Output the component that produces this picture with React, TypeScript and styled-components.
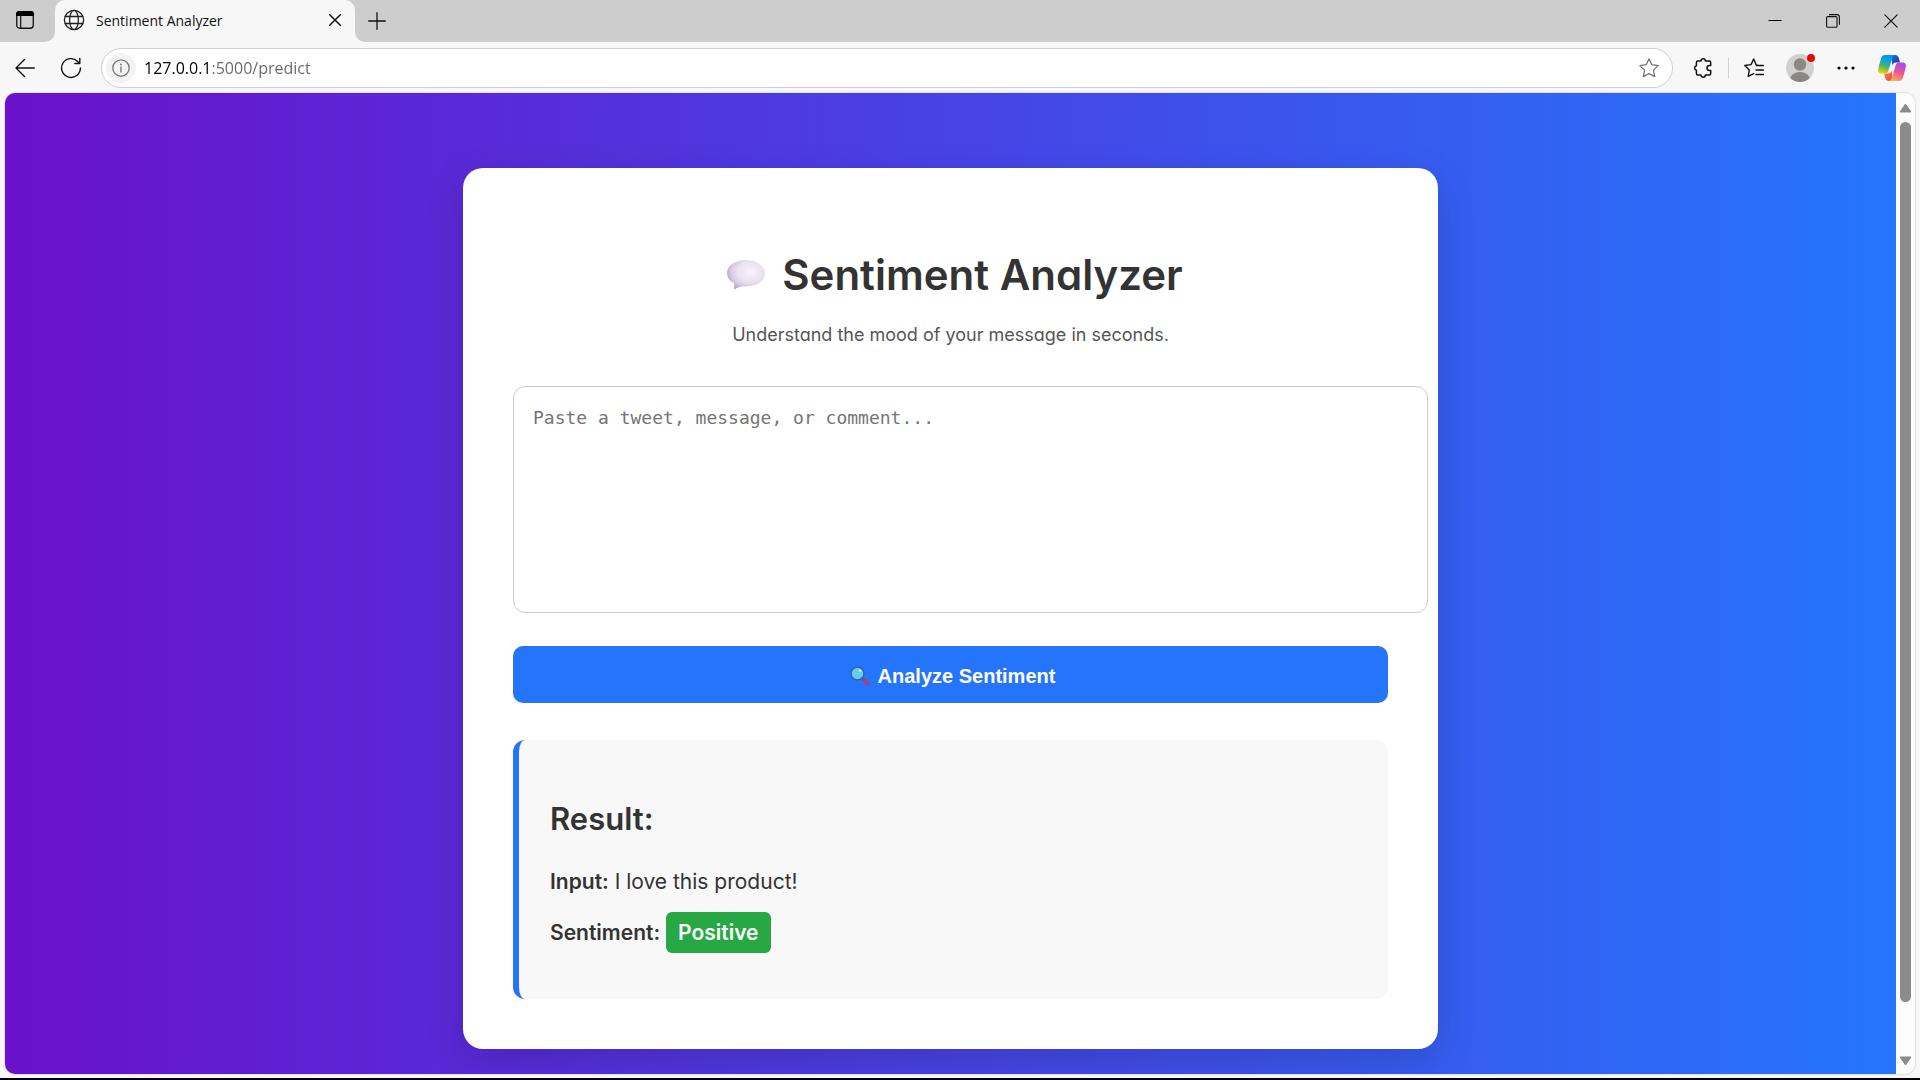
import React from 'react';
import styled, { createGlobalStyle } from 'styled-components';

const uiFont = '"Open Sans", "Noto Sans", sans-serif';
const pageFont = 'Inter, "Open Sans", sans-serif';

const GlobalStyle = createGlobalStyle`
  *, *::before, *::after { box-sizing: border-box; }
  body { margin: 0; background: #f7f7f7; }
  button { font: inherit; color: inherit; border: 0; padding: 0; background: none; cursor: pointer; }
  svg { display: block; flex: none; }
`;

const Window = styled.div`
  min-height: 100vh;
  display: flex;
  flex-direction: column;
  padding-bottom: 4px;
  border-bottom: 2px solid #000;
  background: #f7f7f7;
  font-family: ${uiFont};
  color: #111;
`;

const TabStrip = styled.header`
  display: flex;
  height: 42px;
  background: #f7f7f7;
`;

const StripStart = styled.div`
  width: 55px;
  display: flex;
  align-items: center;
  padding: 0 0 2px 16px;
  background: #cdcdcd;
  border-bottom-right-radius: 10px;
`;

const TabSlot = styled.div`
  width: 300px;
  background: linear-gradient(#cdcdcd 50%, #f7f7f7 50%);
`;

const Tab = styled.div`
  height: 100%;
  display: flex;
  align-items: center;
  padding: 0 10px 2px 8px;
  border-radius: 10px 10px 0 0;
  background: #f7f7f7;
  font-size: 14px;
`;

const TabTitle = styled.span`
  flex: 1;
  margin-left: 11px;
  white-space: nowrap;
`;

const StripRest = styled.div`
  flex: 1;
  display: flex;
  align-items: center;
  justify-content: space-between;
  padding-left: 10px;
  background: #cdcdcd;
  border-bottom-left-radius: 10px;
`;

const WindowControls = styled.div`
  display: flex;
`;

const IconButton = styled.button<{ $width?: number }>`
  width: ${(p) => p.$width ?? 32}px;
  height: 32px;
  flex: none;
  display: flex;
  align-items: center;
  justify-content: center;
`;

const Toolbar = styled.nav`
  display: flex;
  align-items: center;
  height: 51px;
  padding: 0 12px 0 9px;
  gap: 14px;
`;

const AddressBar = styled.div`
  flex: 1;
  height: 40px;
  display: flex;
  align-items: center;
  padding: 0 7px 0 4px;
  border: 1px solid #cfcfcf;
  border-radius: 20px;
  background: #fff;
`;

const InfoButton = styled.button`
  width: 30px;
  height: 30px;
  border-radius: 50%;
  display: flex;
  align-items: center;
  justify-content: center;
  background: #f3f3f3;
`;

const UrlInput = styled.input`
  flex: 1;
  min-width: 0;
  margin-left: 8px;
  padding: 0;
  border: 0;
  outline: 0;
  height: 28px;
  font: 16px ${uiFont};
  color: #666;
  background: linear-gradient(to right, #000 67px, #666 67px);
  -webkit-background-clip: text;
  background-clip: text;
  -webkit-text-fill-color: transparent;
`;

const ToolGroup = styled.div<{ $gap: number }>`
  display: flex;
  align-items: center;
  gap: ${(p) => p.$gap}px;
`;

const Divider = styled.span`
  width: 1px;
  height: 20px;
  background: #cfcfcf;
`;

const Frame = styled.div`
  flex: 1;
  display: flex;
  margin: 0 5px;
  border-radius: 10px;
  overflow: hidden;
  box-shadow: 0 0 2px rgba(0, 0, 0, 0.3);
`;

const Page = styled.main`
  flex: 1;
  min-width: 0;
  display: flex;
  justify-content: center;
  align-items: flex-start;
  padding: 75px 24px 25px;
  background: linear-gradient(to right, #6a11cb, #2575fc);
  font-family: ${pageFont};
  font-feature-settings: "cv11";
  color: #333;
`;

const Card = styled.section`
  width: 100%;
  max-width: 975px;
  padding: 50px;
  border-radius: 20px;
  background: #fff;
  box-shadow: 0 12px 38px rgba(0, 0, 0, 0.15);
`;

const Title = styled.h1`
  display: flex;
  align-items: center;
  justify-content: center;
  gap: 16px;
  margin: 27px 0 0;
  padding-left: 8px;
  font-size: 42px;
  font-weight: 600;
  line-height: 60px;
`;

const Subtitle = styled.p`
  margin: 16px 0 37px;
  font-size: 18px;
  line-height: 28px;
  text-align: center;
  color: #555;
`;

const MessageBox = styled.textarea`
  display: block;
  box-sizing: content-box;
  width: 100%;
  height: 187px;
  padding: 19px;
  border: 1px solid #ccc;
  border-radius: 12px;
  outline: 0;
  resize: none;
  font: 18px/24px "DejaVu Sans Mono", "Liberation Mono", monospace;
  &::placeholder { color: #757575; opacity: 1; }
`;

const AnalyzeButton = styled.button`
  width: 100%;
  height: 57px;
  margin-top: 33px;
  padding: 2px 0 0 4px;
  display: flex;
  align-items: center;
  justify-content: center;
  gap: 8px;
  border-radius: 10px;
  background: #2575fc;
  color: #fff;
  font: bold 20px/24px "Liberation Sans", Arial, sans-serif;
`;

const ResultPanel = styled.section`
  margin-top: 37px;
  padding: 31px;
  border-left: 6px solid #2575fc;
  border-radius: 12px;
  background: #f8f8f8;
`;

const ResultTitle = styled.h2`
  margin: 25px 0;
  font-size: 31px;
  font-weight: 600;
  line-height: 45px;
`;

const ResultLine = styled.p`
  margin: 0 0 20px;
  font-size: 21px;
  line-height: 31px;
  strong { font-weight: 600; }
`;

const Badge = styled.span`
  padding: 8px 12px;
  border-radius: 6px;
  background: #28a745;
  color: #fff;
  font-weight: 600;
`;

const Scrollbar = styled.aside`
  width: 19px;
  display: flex;
  flex-direction: column;
  align-items: center;
  background: #fcfcfc;
`;

const ScrollArrow = styled.button<{ $height: number }>`
  width: 19px;
  height: ${(p) => p.$height}px;
  display: flex;
  align-items: flex-start;
  justify-content: center;
  padding-top: ${(p) => (p.$height > 25 ? 10 : 4)}px;
`;

const Track = styled.div`
  flex: 1;
  width: 11px;
`;

const Thumb = styled.div`
  height: 94.6%;
  border-radius: 6px;
  background: #8b8b8b;
`;

const line = { fill: 'none', stroke: '#111', strokeWidth: 1.5, strokeLinecap: 'round', strokeLinejoin: 'round' } as const;

const WorkspaceIcon = () => (
  <svg width="18" height="18" viewBox="0 0 18 18">
    <rect x=".75" y=".75" width="16.5" height="16.5" rx="3" {...line} strokeWidth={1.3} />
    <path d="M0 5V3a3 3 0 0 1 3-3h12a3 3 0 0 1 3 3v2z" fill="#000" />
    <path d="M4.7 5v12" {...line} strokeWidth={1.2} />
  </svg>
);

const GlobeIcon = () => (
  <svg width="22" height="22" viewBox="0 0 22 22">
    <g {...line} strokeWidth={1.3} stroke="#222">
      <circle cx="11" cy="11" r="9.6" />
      <ellipse cx="11" cy="11" rx="4.4" ry="9.6" />
      <path d="M2.3 7.5h17.4M2.3 14.5h17.4" />
    </g>
  </svg>
);

const CrossIcon = ({ size, weight }: { size: number; weight: number }) => (
  <svg width={size} height={size} viewBox="0 0 12 12">
    <path d="M.7.7l10.6 10.6M11.3.7L.7 11.3" {...line} strokeWidth={weight} />
  </svg>
);

const PlusIcon = () => (
  <svg width="18" height="18" viewBox="0 0 18 18">
    <path d="M9 .7v16.6M.7 9h16.6" {...line} strokeWidth={1.3} />
  </svg>
);

const MinimizeIcon = () => (
  <svg width="14" height="14" viewBox="0 0 14 14">
    <path d="M.5 6.5h13" stroke="#000" />
  </svg>
);

const RestoreIcon = () => (
  <svg width="14" height="14" viewBox="0 0 14 14">
    <g fill="none" stroke="#111" strokeWidth="1.1">
      <rect x=".6" y="2.6" width="10.4" height="10.6" rx="1" />
      <path d="M3 .6h8.2a2.2 2.2 0 0 1 2.2 2.2v8" />
    </g>
  </svg>
);

const BackIcon = () => (
  <svg width="20" height="20" viewBox="0 0 20 20">
    <path d="M19.3 10H1M9.5 1.5L1 10l8.5 8.5" {...line} strokeWidth={1.4} />
  </svg>
);

const ReloadIcon = () => (
  <svg width="22" height="22" viewBox="0 0 22 22">
    <path d="M20.4 11a9.4 9.4 0 1 1-2.7-6.6l1.8 1.9M19.8 1.500v5h-5" {...line} strokeWidth={1.4} />
  </svg>
);

const InfoIcon = () => (
  <svg width="18" height="18" viewBox="0 0 18 18">
    <circle cx="9" cy="9" r="8.2" fill="none" stroke="#767676" strokeWidth="1.3" />
    <path d="M9 8v5" stroke="#767676" strokeWidth="1.4" strokeLinecap="round" />
    <circle cx="9" cy="5.4" r=".9" fill="#767676" />
  </svg>
);

const StarIcon = () => (
  <svg width="20" height="20" viewBox="0 0 20 20">
    <path
      d="M10 .9l2.8 5.8 6.4.9-4.7 4.5 1.2 6.6L10 15.700l-5.700 3 1.200-6.600L.8 7.600l6.400-.9z"
      {...line}
      stroke="#767676"
      strokeWidth={1.3}
    />
  </svg>
);

const PuzzleIcon = () => (
  <svg width="20" height="20" viewBox="0 0 20 20">
    <path
      d="M8 3a2.2 2.2 0 0 1 4.400 0h3.800a1.500 1.500 0 0 1 1.500 1.500v3h-1.200a2.500 2.500 0 0 0 0 5h1.200v3a1.500 1.500 0 0 1-1.500 1.500h-3.800a2.200 2.200 0 0 1-4.400 0H4.900a1.500 1.500 0 0 1-1.500-1.500v-3.300a2.300 2.300 0 0 1 0-4.500V4.500A1.500 1.500 0 0 1 4.900 3z"
      {...line}
    />
  </svg>
);

const FavoritesIcon = () => (
  <svg width="20" height="20" viewBox="0 0 20 20">
    <path d="M13.5 7.2l-1.300-.2L9.700 1 7 6.600l-6.200.9 4.500 4.400-1.100 6.400 5.500-2.700M12.500 7.500H19.400M12 12h7.400M12 16.500h7.400" {...line} strokeWidth={1.4} />
  </svg>
);

const AvatarIcon = () => (
  <svg width="32" height="32" viewBox="0 0 32 32">
    <clipPath id="avatar-clip"><circle cx="16" cy="16" r="14" /></clipPath>
    <circle cx="16" cy="16" r="14" fill="#d2d0ce" />
    <g clipPath="url(#avatar-clip)" fill="#8a8886">
      <circle cx="16" cy="12.5" r="6.2" />
      <ellipse cx="16" cy="28" rx="10" ry="8" />
    </g>
    <circle cx="27" cy="6" r="4" fill="#e30b0b" />
  </svg>
);

const MoreIcon = () => (
  <svg width="18" height="4" viewBox="0 0 18 4">
    <circle cx="2" cy="2" r="1.6" /><circle cx="9" cy="2" r="1.6" /><circle cx="16" cy="2" r="1.6" />
  </svg>
);

const CopilotIcon = () => (
  <svg width="30" height="28" viewBox="0 0 30 28">
    <defs>
      <linearGradient id="cp-a" x1=".6" y1="0" x2=".3" y2="1">
        <stop offset="0" stopColor="#0a8ff0" /><stop offset=".35" stopColor="#12a5cf" />
        <stop offset=".65" stopColor="#52b95c" /><stop offset="1" stopColor="#f5d000" />
      </linearGradient>
      <linearGradient id="cp-b" x1=".7" y1="0" x2=".3" y2="1">
        <stop offset="0" stopColor="#a24df0" /><stop offset=".5" stopColor="#ee5590" /><stop offset="1" stopColor="#ffae5c" />
      </linearGradient>
      <linearGradient id="cp-c" x1="0" y1="0" x2="1" y2="1">
        <stop offset="0" stopColor="#1a6fe0" /><stop offset="1" stopColor="#1833b5" />
      </linearGradient>
      <linearGradient id="cp-d" x1="0" y1="0" x2="1" y2="1">
        <stop offset="0" stopColor="#ff8a2a" /><stop offset="1" stopColor="#ee3f4e" />
      </linearGradient>
    </defs>
    <path d="M14 1h4c2.200 0 3.200 1 3.800 3l1.200 4.500h-4c-2 0-3 1-3.600 3z" fill="url(#cp-c)" />
    <path d="M16 27h-4c-2.200 0-3.200-1-3.800-3L7 19.500h4c2 0 3-1 3.600-3z" fill="url(#cp-d)" />
    <path d="M8 1h10c-1.600.4-2.300 1.600-2.900 3.500l-3.700 12c-.6 2-1.600 3-3.600 3H4.500C1 19.500.6 17 1.400 14L4 4.500C4.700 2.100 5.800 1 8 1z" fill="url(#cp-a)" />
    <path d="M22 27H12c1.600-.4 2.300-1.600 2.900-3.500l3.700-12c.6-2 1.600-3 3.600-3h3.300c3.500 0 3.900 2.500 3.100 5.500L26 23.500c-.7 2.400-1.800 3.500-4 3.500z" fill="url(#cp-b)" />
  </svg>
);

const BubbleIcon = () => (
  <svg width="40" height="32" viewBox="0 0 40 32">
    <defs>
      <radialGradient id="bubble" cx=".62" cy=".4" r=".62">
        <stop offset="0" stopColor="#f6f3f9" /><stop offset=".55" stopColor="#eae2f1" />
        <stop offset=".85" stopColor="#d5c8e3" /><stop offset="1" stopColor="#b8a8d4" />
      </radialGradient>
    </defs>
    <path d="M20 1c10.600 0 19 5.700 19 13.200S30.600 27.600 20 27.600h-4.700c-2.300.4-4.600 1.500-7.100 3.200V24C3.800 21.800 1 18.300 1 14.200 1 6.700 9.400 1 20 1z" fill="url(#bubble)" />
  </svg>
);

const MagnifierIcon = () => (
  <svg width="20" height="20" viewBox="0 0 20 20">
    <path d="M14.500 14.500l3 3" stroke="#9c4a78" strokeWidth="4.400" strokeLinecap="round" />
    <path d="M11.500 11.500l2.500 2.500" stroke="#4d5aa6" strokeWidth="2" />
    <circle cx="7.500" cy="7.500" r="6.500" fill="#5fcdec" stroke="#3b5aa8" strokeWidth="1.400" />
    <circle cx="10" cy="4.600" r="1.300" fill="#c9f1fb" />
  </svg>
);

const Arrow = ({ down = false }: { down?: boolean }) => (
  <svg width="13" height="10" viewBox="0 0 13 10">
    <path d={down ? 'M1 1h11L6.500 9z' : 'M6.500 1l5.500 8H1z'} fill="#8b8b8b" stroke="#8b8b8b" strokeLinejoin="round" />
  </svg>
);

export default function App() {
  return (
    <Window>
      <GlobalStyle />
      <TabStrip>
        <StripStart>
          <button aria-label="Tab actions"><WorkspaceIcon /></button>
        </StripStart>
        <TabSlot>
          <Tab>
            <GlobeIcon />
            <TabTitle>Sentiment Analyzer</TabTitle>
            <IconButton $width={20} aria-label="Close tab"><CrossIcon size={12} weight={1.5} /></IconButton>
          </Tab>
        </TabSlot>
        <StripRest>
          <IconButton $width={24} aria-label="New tab"><PlusIcon /></IconButton>
          <WindowControls>
            <IconButton $width={58} aria-label="Minimize"><MinimizeIcon /></IconButton>
            <IconButton $width={58} aria-label="Restore"><RestoreIcon /></IconButton>
            <IconButton $width={58} aria-label="Close"><CrossIcon size={14} weight={1} /></IconButton>
          </WindowControls>
        </StripRest>
      </TabStrip>

      <Toolbar>
        <IconButton aria-label="Back"><BackIcon /></IconButton>
        <IconButton aria-label="Refresh"><ReloadIcon /></IconButton>
        <AddressBar>
          <InfoButton aria-label="Site information"><InfoIcon /></InfoButton>
          <UrlInput aria-label="Address" defaultValue="127.0.0.1:5000/predict" spellCheck={false} />
          <IconButton aria-label="Add to favorites"><StarIcon /></IconButton>
        </AddressBar>
        <ToolGroup $gap={9}>
          <IconButton aria-label="Extensions"><PuzzleIcon /></IconButton>
          <Divider />
          <IconButton aria-label="Favorites"><FavoritesIcon /></IconButton>
        </ToolGroup>
        <ToolGroup $gap={14}>
          <IconButton aria-label="Profile"><AvatarIcon /></IconButton>
          <IconButton aria-label="Settings and more"><MoreIcon /></IconButton>
          <IconButton aria-label="Copilot"><CopilotIcon /></IconButton>
        </ToolGroup>
      </Toolbar>

      <Frame>
        <Page>
          <Card>
            <Title><BubbleIcon />Sentiment Analyzer</Title>
            <Subtitle>Understand the mood of your message in seconds.</Subtitle>
            <MessageBox aria-label="Message" placeholder="Paste a tweet, message, or comment..." />
            <AnalyzeButton><MagnifierIcon />Analyze Sentiment</AnalyzeButton>
            <ResultPanel>
              <ResultTitle>Result:</ResultTitle>
              <ResultLine><strong>Input:</strong> I love this product!</ResultLine>
              <ResultLine><strong>Sentiment:</strong> <Badge>Positive</Badge></ResultLine>
            </ResultPanel>
          </Card>
        </Page>
        <Scrollbar>
          <ScrollArrow $height={29} aria-label="Scroll up"><Arrow /></ScrollArrow>
          <Track><Thumb /></Track>
          <ScrollArrow $height={22} aria-label="Scroll down"><Arrow down /></ScrollArrow>
        </Scrollbar>
      </Frame>
    </Window>
  );
}
